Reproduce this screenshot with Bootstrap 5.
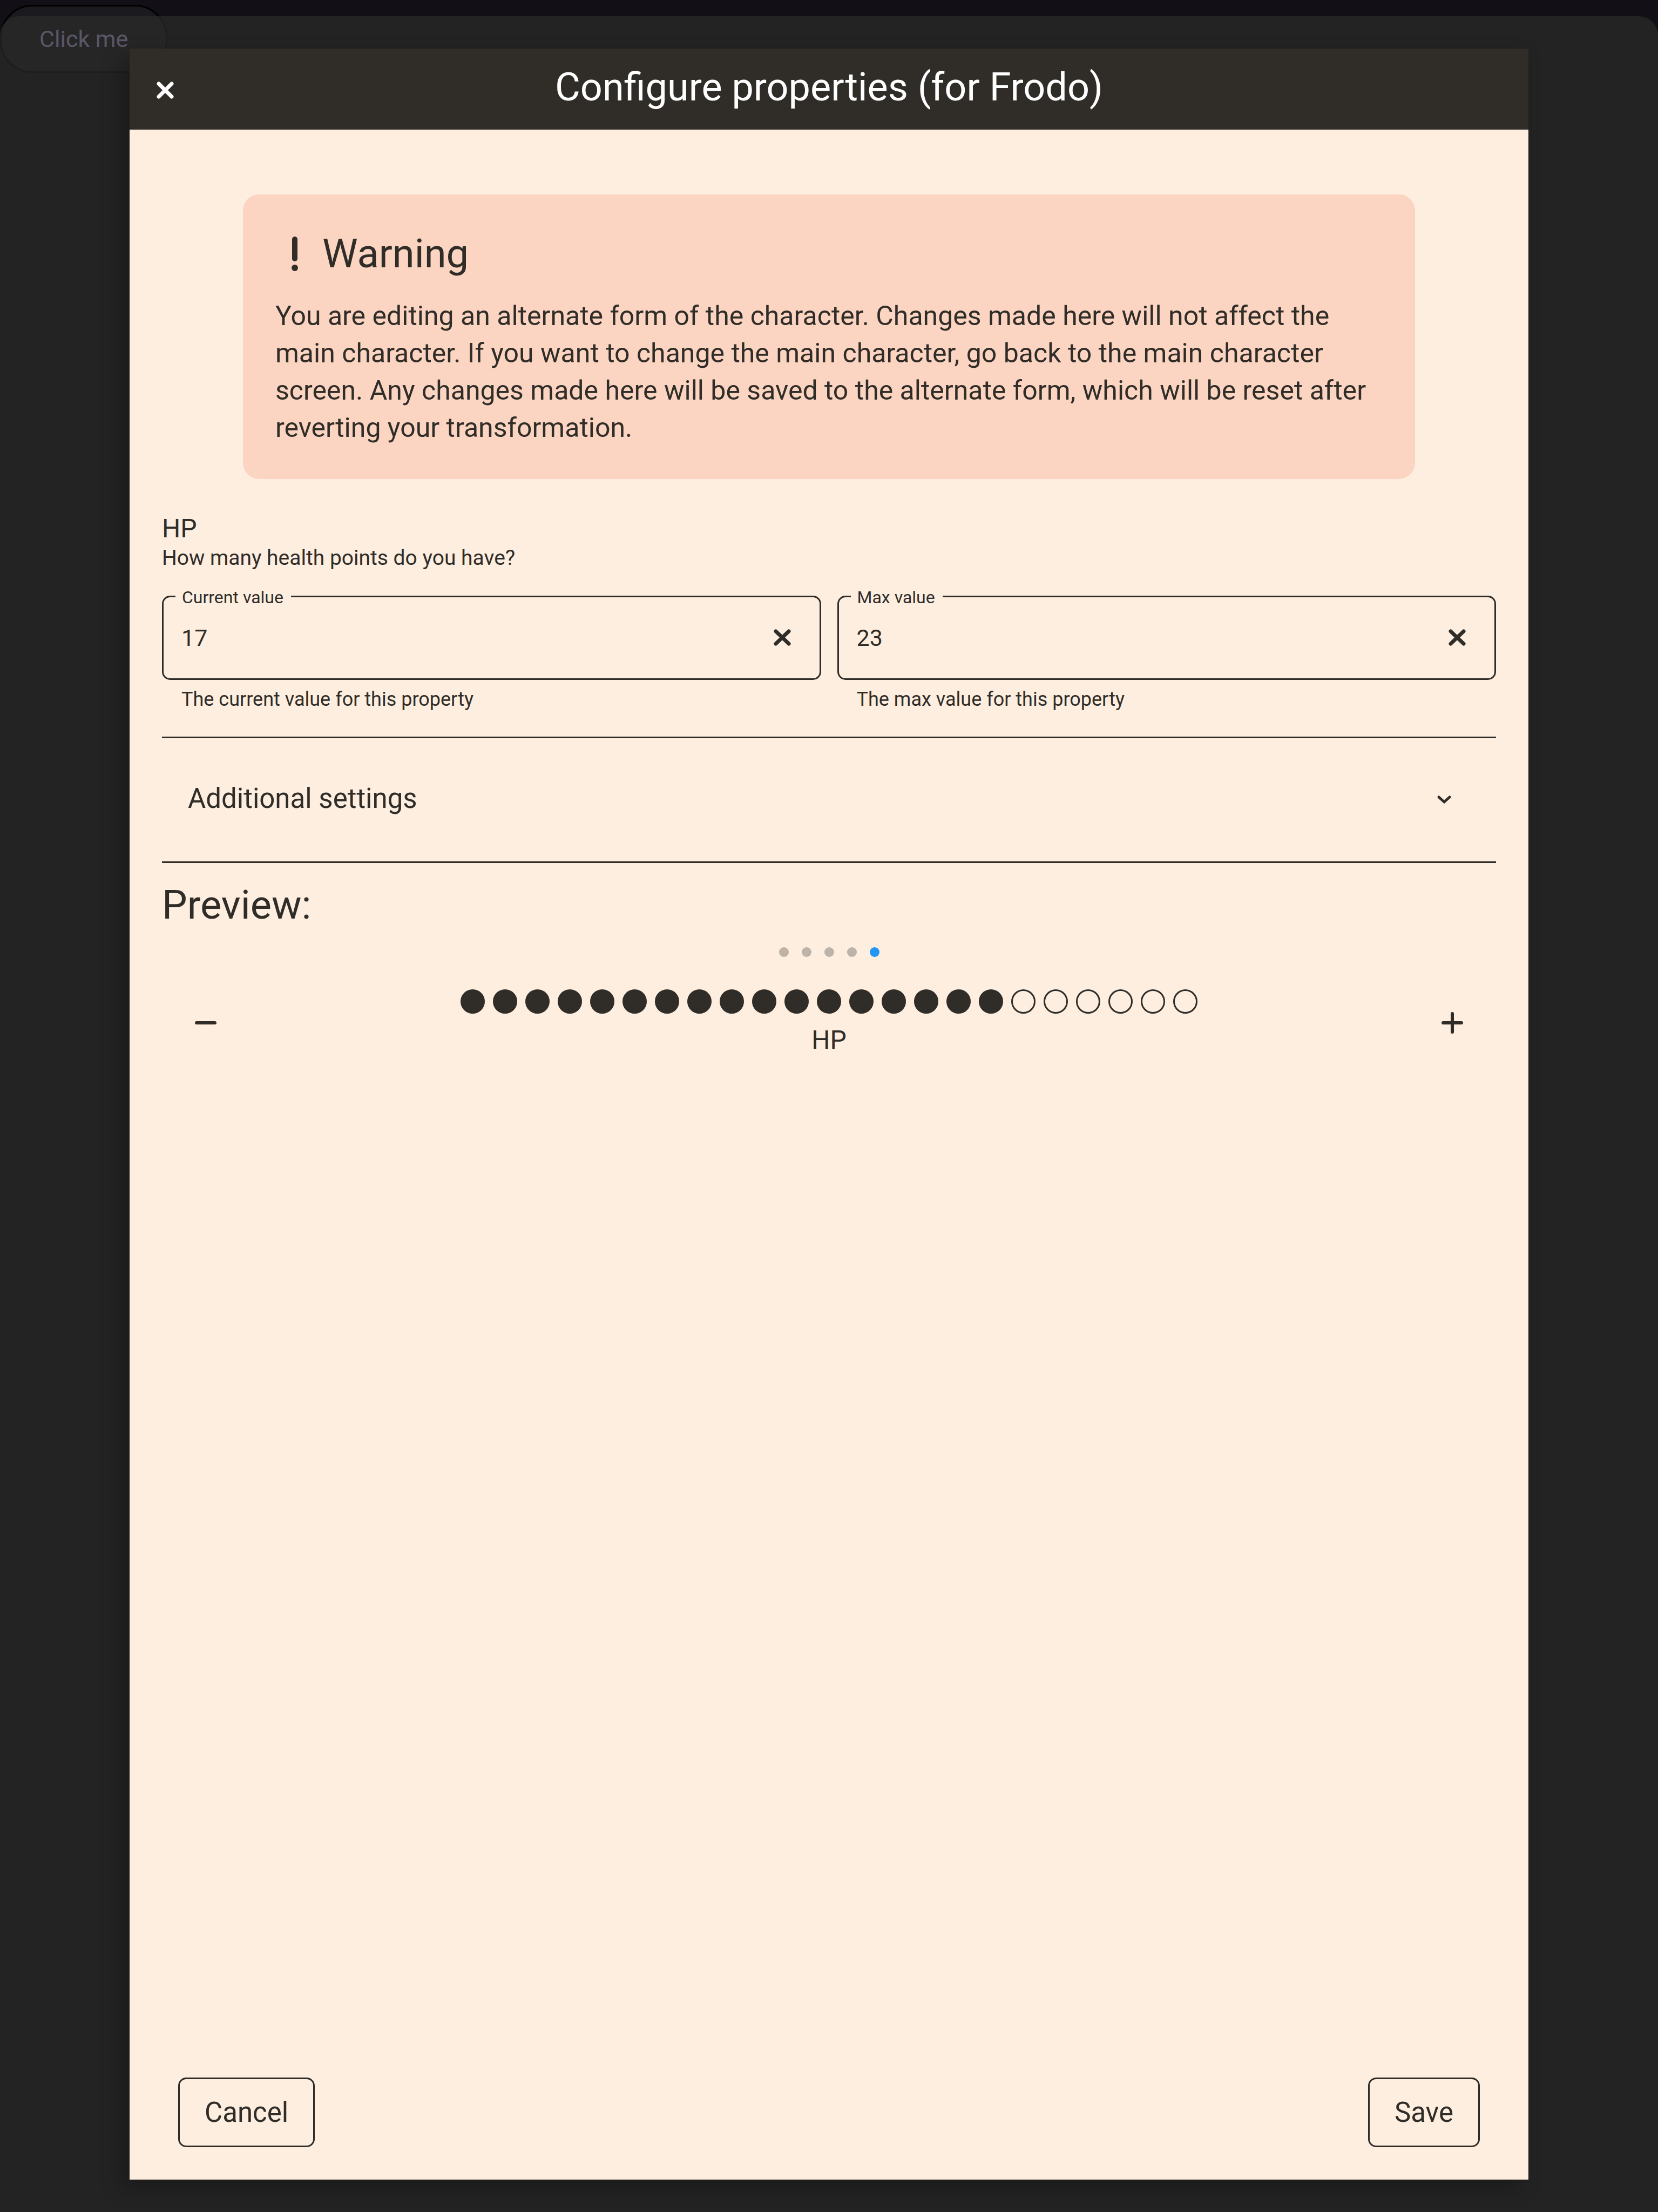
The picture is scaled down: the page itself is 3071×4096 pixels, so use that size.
<!DOCTYPE html>
<html lang="en">
<head>
<meta charset="utf-8">
<meta name="viewport" content="width=device-width, initial-scale=1">
<title>Configure properties</title>
<link href="https://cdn.jsdelivr.net/npm/bootstrap@5.3.0/dist/css/bootstrap.min.css" rel="stylesheet">
<style>
:root { --ink: #302d28; --paper: #fdeee0; --notice: #fcd5c2; }
body { background: #121016; color: var(--ink); font-family: Roboto, "Liberation Sans", sans-serif; font-size: 48px; line-height: 64px; }
svg { display: block; fill: none; stroke: currentColor; stroke-linecap: round; }
.scene { padding-top: 30px; }
.behind-btn { top: 9px; left: 0; height: 126px; padding: 0 70px; border: 3px solid #000; border-radius: 60px; background: #1b1a1e; color: #b9aae0; font-size: 43px; line-height: 120px; }
.sheet { padding: 60px 240px; background: rgba(45, 45, 43, .67); border-radius: 36px 36px 0 0; }
.dialog-box { background: var(--paper); box-shadow: -15px 15px 36px rgba(0, 0, 0, .26); }
.dialog-head { height: 150px; padding: 4px 30px 0; background: var(--ink); color: #fff; }
.icon-btn { width: 72px; height: 72px; padding: 0; border: 0; background: none; color: inherit; }
.dialog-title { font-size: 72px; line-height: 86px; font-weight: 400; margin: 0 0 10px; }
.dialog-content { padding: 120px 60px 0; }
.notice { margin: 0 150px; padding: 60px; border-radius: 30px; background: var(--notice); }
.notice-title { gap: 15px; font-size: 74px; line-height: 100px; font-weight: 400; margin: 0 0 31px; }
.notice-text { font-size: 50px; line-height: 69px; margin: 0; }
.prop-name { font-size: 48px; line-height: 60px; font-weight: 400; margin: 62px 0 0; }
.prop-hint { font-size: 39px; line-height: 48px; margin: 0 0 46px; }
.fields { display: flex; gap: 30px; }
.field-box { height: 156px; border: 3px solid var(--ink); border-radius: 15px; }
.field-box label { top: -24px; left: 22px; padding: 0 14px 0 12px; background: var(--paper); font-size: 32px; line-height: 48px; }
.field-box input { min-width: 0; padding: 0 0 0 33px; border: 0; outline: 0; background: none; color: inherit; font-size: 43px; line-height: 60px; }
.field-box .icon-btn { width: 138px; height: 150px; }
.field-help { margin: 12px 0 45px 36px; font-size: 36px; line-height: 48px; }
.extra { height: 234px; padding: 0 72px 0 48px; border: solid var(--ink); border-width: 3px 0; background: none; color: inherit; font-size: 51px; }
.preview-title { margin: 30px 0; font-size: 74px; line-height: 96px; font-weight: 400; }
.pages { gap: 24px; margin-bottom: 60px; }
.pages span { width: 18px; height: 18px; border-radius: 50%; background: #beb3a8; }
.pages .current { background: #2196f3; }
.stepper .icon-btn { width: 162px; }
.pips { gap: 15px; margin-bottom: 17px; }
.pips span { width: 45px; height: 45px; border: 3px solid var(--ink); border-radius: 50%; }
.pips .full { background: var(--ink); }
.dialog-foot { padding: 60px 90px; }
.line-btn { height: 129px; padding: 0 46px; border: 3px solid var(--ink); border-radius: 15px; background: none; color: inherit; font-size: 51px; line-height: 120px; }
</style>
</head>
<body>
<div class="scene position-relative d-flex min-vh-100">
  <button type="button" class="behind-btn position-absolute">Click me</button>
  <div class="sheet position-relative flex-grow-1 d-flex">
    <main class="dialog-box flex-grow-1 d-flex flex-column" role="dialog" aria-labelledby="dialogTitle">
      <header class="dialog-head d-flex align-items-center justify-content-between">
        <button type="button" class="icon-btn d-flex align-items-center justify-content-center" aria-label="Close">
          <svg width="72" height="72" viewBox="0 0 72 72" stroke-width="7"><path d="M24 24l24 24M48 24L24 48"/></svg>
        </button>
        <h1 class="dialog-title flex-grow-1 text-center" id="dialogTitle">Configure properties (for Frodo)</h1>
        <span class="icon-btn"></span>
      </header>

      <div class="dialog-content">
        <section class="notice">
          <h2 class="notice-title d-flex align-items-center">
            <svg width="72" height="72" viewBox="0 0 72 72"><path stroke-width="10" d="M36 9v36"/><circle cx="36" cy="62" r="6" fill="currentColor" stroke="none"/></svg>
            Warning
          </h2>
          <p class="notice-text">You are editing an alternate form of the character. Changes made here will not affect the main character. If you want to change the main character, go back to the main character screen. Any changes made here will be saved to the alternate form, which will be reset after reverting your transformation.</p>
        </section>

        <h2 class="prop-name">HP</h2>
        <p class="prop-hint">How many health points do you have?</p>
        <div class="fields">
          <div class="w-50">
            <div class="field-box position-relative d-flex">
              <label class="position-absolute" for="currentValue">Current value</label>
              <input class="flex-grow-1" type="text" inputmode="numeric" id="currentValue" value="17">
              <button type="button" class="icon-btn d-flex align-items-center justify-content-center" aria-label="Clear current value">
                <svg width="72" height="72" viewBox="0 0 72 72" stroke-width="7"><path d="M24 24l24 23M48 24L24 47"/></svg>
              </button>
            </div>
            <p class="field-help">The current value for this property</p>
          </div>
          <div class="w-50">
            <div class="field-box position-relative d-flex">
              <label class="position-absolute" for="maxValue">Max value</label>
              <input class="flex-grow-1" type="text" inputmode="numeric" id="maxValue" value="23">
              <button type="button" class="icon-btn d-flex align-items-center justify-content-center" aria-label="Clear max value">
                <svg width="72" height="72" viewBox="0 0 72 72" stroke-width="7"><path d="M24 24l24 23M48 24L24 47"/></svg>
              </button>
            </div>
            <p class="field-help">The max value for this property</p>
          </div>
        </div>

        <button type="button" class="extra w-100 d-flex align-items-center justify-content-between" aria-expanded="false">
          <span class="pb-1">Additional settings</span>
          <svg width="48" height="48" viewBox="0 0 48 48" stroke-width="5" stroke-linecap="butt"><path d="M14 19l10 9 10-9"/></svg>
        </button>

        <h2 class="preview-title">Preview:</h2>
        <div class="pages d-flex justify-content-center">
          <span></span><span></span><span></span><span></span><span class="current"></span>
        </div>
        <div class="stepper d-flex align-items-center justify-content-between">
          <button type="button" class="icon-btn d-flex align-items-center justify-content-center" aria-label="Decrease">
            <svg width="72" height="72" viewBox="0 0 72 72" stroke-width="6"><path d="M19 35h34"/></svg>
          </button>
          <div>
            <div class="pips d-flex">
              <span class="full"></span><span class="full"></span><span class="full"></span><span class="full"></span><span class="full"></span><span class="full"></span><span class="full"></span><span class="full"></span><span class="full"></span><span class="full"></span><span class="full"></span><span class="full"></span><span class="full"></span><span class="full"></span><span class="full"></span><span class="full"></span><span class="full"></span><span></span><span></span><span></span><span></span><span></span><span></span>
            </div>
            <div class="text-center">HP</div>
          </div>
          <button type="button" class="icon-btn d-flex align-items-center justify-content-center" aria-label="Increase">
            <svg width="72" height="72" viewBox="0 0 72 72" stroke-width="6"><path d="M19 35h34M36 18v34"/></svg>
          </button>
        </div>
      </div>

      <footer class="dialog-foot mt-auto d-flex justify-content-between">
        <button type="button" class="line-btn">Cancel</button>
        <button type="button" class="line-btn">Save</button>
      </footer>
    </main>
  </div>
</div>
<script src="https://cdn.jsdelivr.net/npm/bootstrap@5.3.0/dist/js/bootstrap.bundle.min.js"></script>
</body>
</html>
